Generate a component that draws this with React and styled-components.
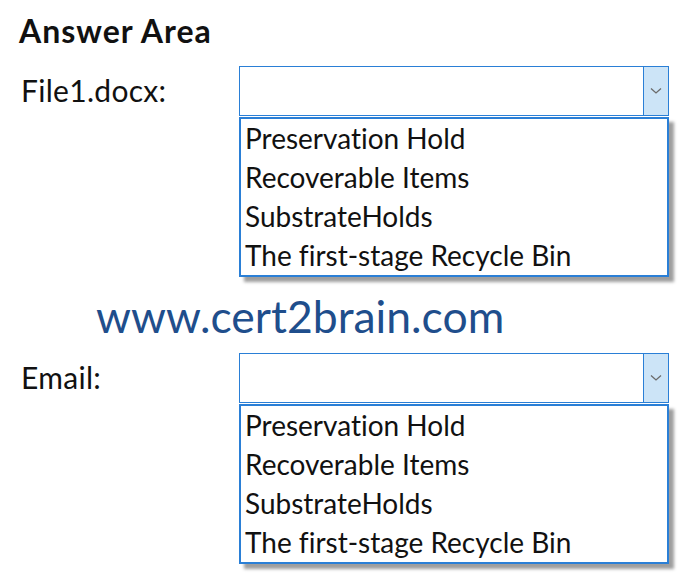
import React from 'react'
import styled, { createGlobalStyle } from 'styled-components'

const GlobalStyle = createGlobalStyle`
  html, body {
    margin: 0;
    padding: 0;
    background: #fff;
  }
  body {
    font-family: Lato, "Open Sans", sans-serif;
    font-variant-ligatures: none;
    color: #111;
  }
`

const Page = styled.div`
  width: 696px;
  height: 587px;
  box-sizing: border-box;
  padding: 13px 0 0 19px;
`

const Title = styled.h1`
  margin: 0;
  font-size: 32px;
  font-weight: 700;
  line-height: 36px;
  letter-spacing: 1px;
`

const Row = styled.div`
  display: grid;
  grid-template-columns: 220px 430px;
  margin-top: ${props => props.top}px;
`

const Label = styled.div`
  padding: 7px 0 0 2px;
  font-size: 30px;
  line-height: 34px;
  letter-spacing: 0.3px;
`

const Dropdown = styled.div`
  display: flex;
  flex-direction: column;
  gap: 1px;
`

const Combo = styled.div`
  display: flex;
  height: 50px;
  box-sizing: border-box;
  border: 1.5px solid #2a7fd6;
  background: #fff;
`

const ComboField = styled.div`
  flex: 1;
`

const ComboButton = styled.div`
  width: 24px;
  display: flex;
  align-items: center;
  justify-content: center;
  background: #cce4f7;
  border-left: 1.5px solid #2a7fd6;
`

const List = styled.ul`
  margin: 0;
  padding: 0;
  list-style: none;
  border: 2px solid #2a7fd6;
  background: #fff;
  box-shadow: 5px 5px 3px rgba(0, 0, 0, 0.38);
`

const Item = styled.li`
  height: 39px;
  padding-left: 4px;
  font-size: 28px;
  line-height: 39px;
  white-space: nowrap;
`

const Watermark = styled.div`
  margin: 14px 0 0 77px;
  font-size: 44.5px;
  line-height: 50px;
  color: #1f4e8c;
`

const options = [
  'Preservation Hold',
  'Recoverable Items',
  'SubstrateHolds',
  'The first-stage Recycle Bin'
]

function Chevron() {
  return (
    <svg width="12" height="8" viewBox="0 0 12 8">
      <path d="M1 1.5 L6 6 L11 1.5" fill="none" stroke="#6b6b6b" strokeWidth="1.3" />
    </svg>
  )
}

function Select({ label, top }) {
  return (
    <Row top={top}>
      <Label>{label}</Label>
      <Dropdown>
        <Combo>
          <ComboField />
          <ComboButton>
            <Chevron />
          </ComboButton>
        </Combo>
        <List>
          {options.map(option => (
            <Item key={option}>{option}</Item>
          ))}
        </List>
      </Dropdown>
    </Row>
  )
}

export default function App() {
  return (
    <>
      <GlobalStyle />
      <Page>
        <Title>Answer Area</Title>
        <Select label="File1.docx:" top={17} />
        <Watermark>www.cert2brain.com</Watermark>
        <Select label="Email:" top={12} />
      </Page>
    </>
  )
}
